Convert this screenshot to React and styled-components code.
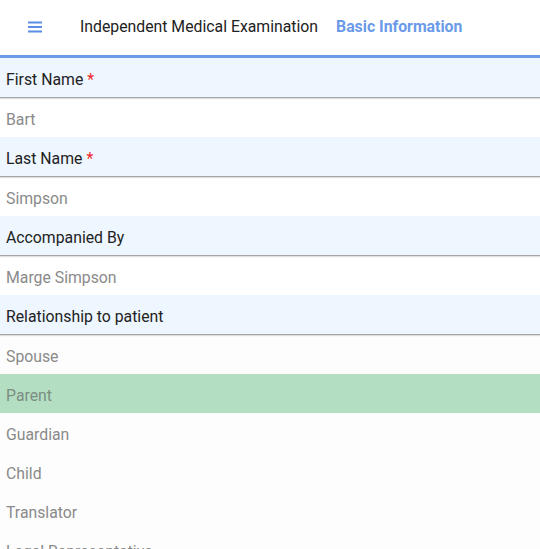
import React from "react";
import styled, { createGlobalStyle } from "styled-components";

const Global = createGlobalStyle`
  html, body { margin: 0; padding: 0; background: #fff; }
  body { font-family: Roboto, "Noto Sans", "Liberation Sans", sans-serif; overflow: hidden; }
`;

const Page = styled.div`
  width: 540px;
  display: flex;
  flex-direction: column;
`;

const Header = styled.header`
  height: 55px;
  box-sizing: content-box;
  padding-bottom: 0;
  display: flex;
  align-items: center;
  border-bottom: 3px solid #6b9be8;
  & > * { margin-top: -2px; }
`;

const MenuButton = styled.div`
  width: 80px;
  display: flex;
  align-items: center;
  padding-left: 28px;
  box-sizing: border-box;
  color: #5b8ee6;
`;

const Title = styled.div`
  font-size: 15.8px;
  color: #222;
  margin-right: 18px;
`;

const Crumb = styled.div`
  font-size: 15.8px;
  font-weight: 700;
  color: #6a9ae8;
`;

const LabelRow = styled.div`
  height: 40px;
  box-sizing: border-box;
  padding-top: 4px;
  display: flex;
  align-items: center;
  padding-left: 6px;
  background: #eef6ff;
  border-bottom: 1px solid #a6a6a6;
  box-shadow: 0 1px 1px rgba(0, 0, 0, 0.12);
  font-size: 15.8px;
  color: #222;
  position: relative;
`;

const Required = styled.span`
  color: #f0292b;
  margin-left: 4px;
`;

const ValueRow = styled.div`
  height: 39px;
  box-sizing: border-box;
  padding-top: 4px;
  display: flex;
  align-items: center;
  padding-left: 6px;
  font-size: 15.8px;
  color: ${(p) => (p.$selected ? "#7c8d82" : "#8a8a8a")};
  background: ${(p) => (p.$selected ? "#b3dec2" : p.$option ? "#fdfdfd" : "#fff")};
`;

const fields = [
  { label: "First Name", required: true, value: "Bart" },
  { label: "Last Name", required: true, value: "Simpson" },
  { label: "Accompanied By", value: "Marge Simpson" },
];

const options = ["Spouse", "Parent", "Guardian", "Child", "Translator", "Legal Representative"];

export default function App() {
  return (
    <Page>
      <Global />
      <Header>
        <MenuButton>
          <svg width="14" height="12" viewBox="0 0 14 12">
            <rect x="0" y="0.5" width="14" height="2" fill="currentColor" />
            <rect x="0" y="5" width="14" height="2" fill="currentColor" />
            <rect x="0" y="9.5" width="14" height="2" fill="currentColor" />
          </svg>
        </MenuButton>
        <Title>Independent Medical Examination</Title>
        <Crumb>Basic Information</Crumb>
      </Header>
      {fields.map((f) => (
        <React.Fragment key={f.label}>
          <LabelRow>
            {f.label}
            {f.required && <Required>*</Required>}
          </LabelRow>
          <ValueRow>{f.value}</ValueRow>
        </React.Fragment>
      ))}
      <LabelRow>Relationship to patient</LabelRow>
      {options.map((o) => (
        <ValueRow key={o} $option $selected={o === "Parent"}>
          {o}
        </ValueRow>
      ))}
    </Page>
  );
}
